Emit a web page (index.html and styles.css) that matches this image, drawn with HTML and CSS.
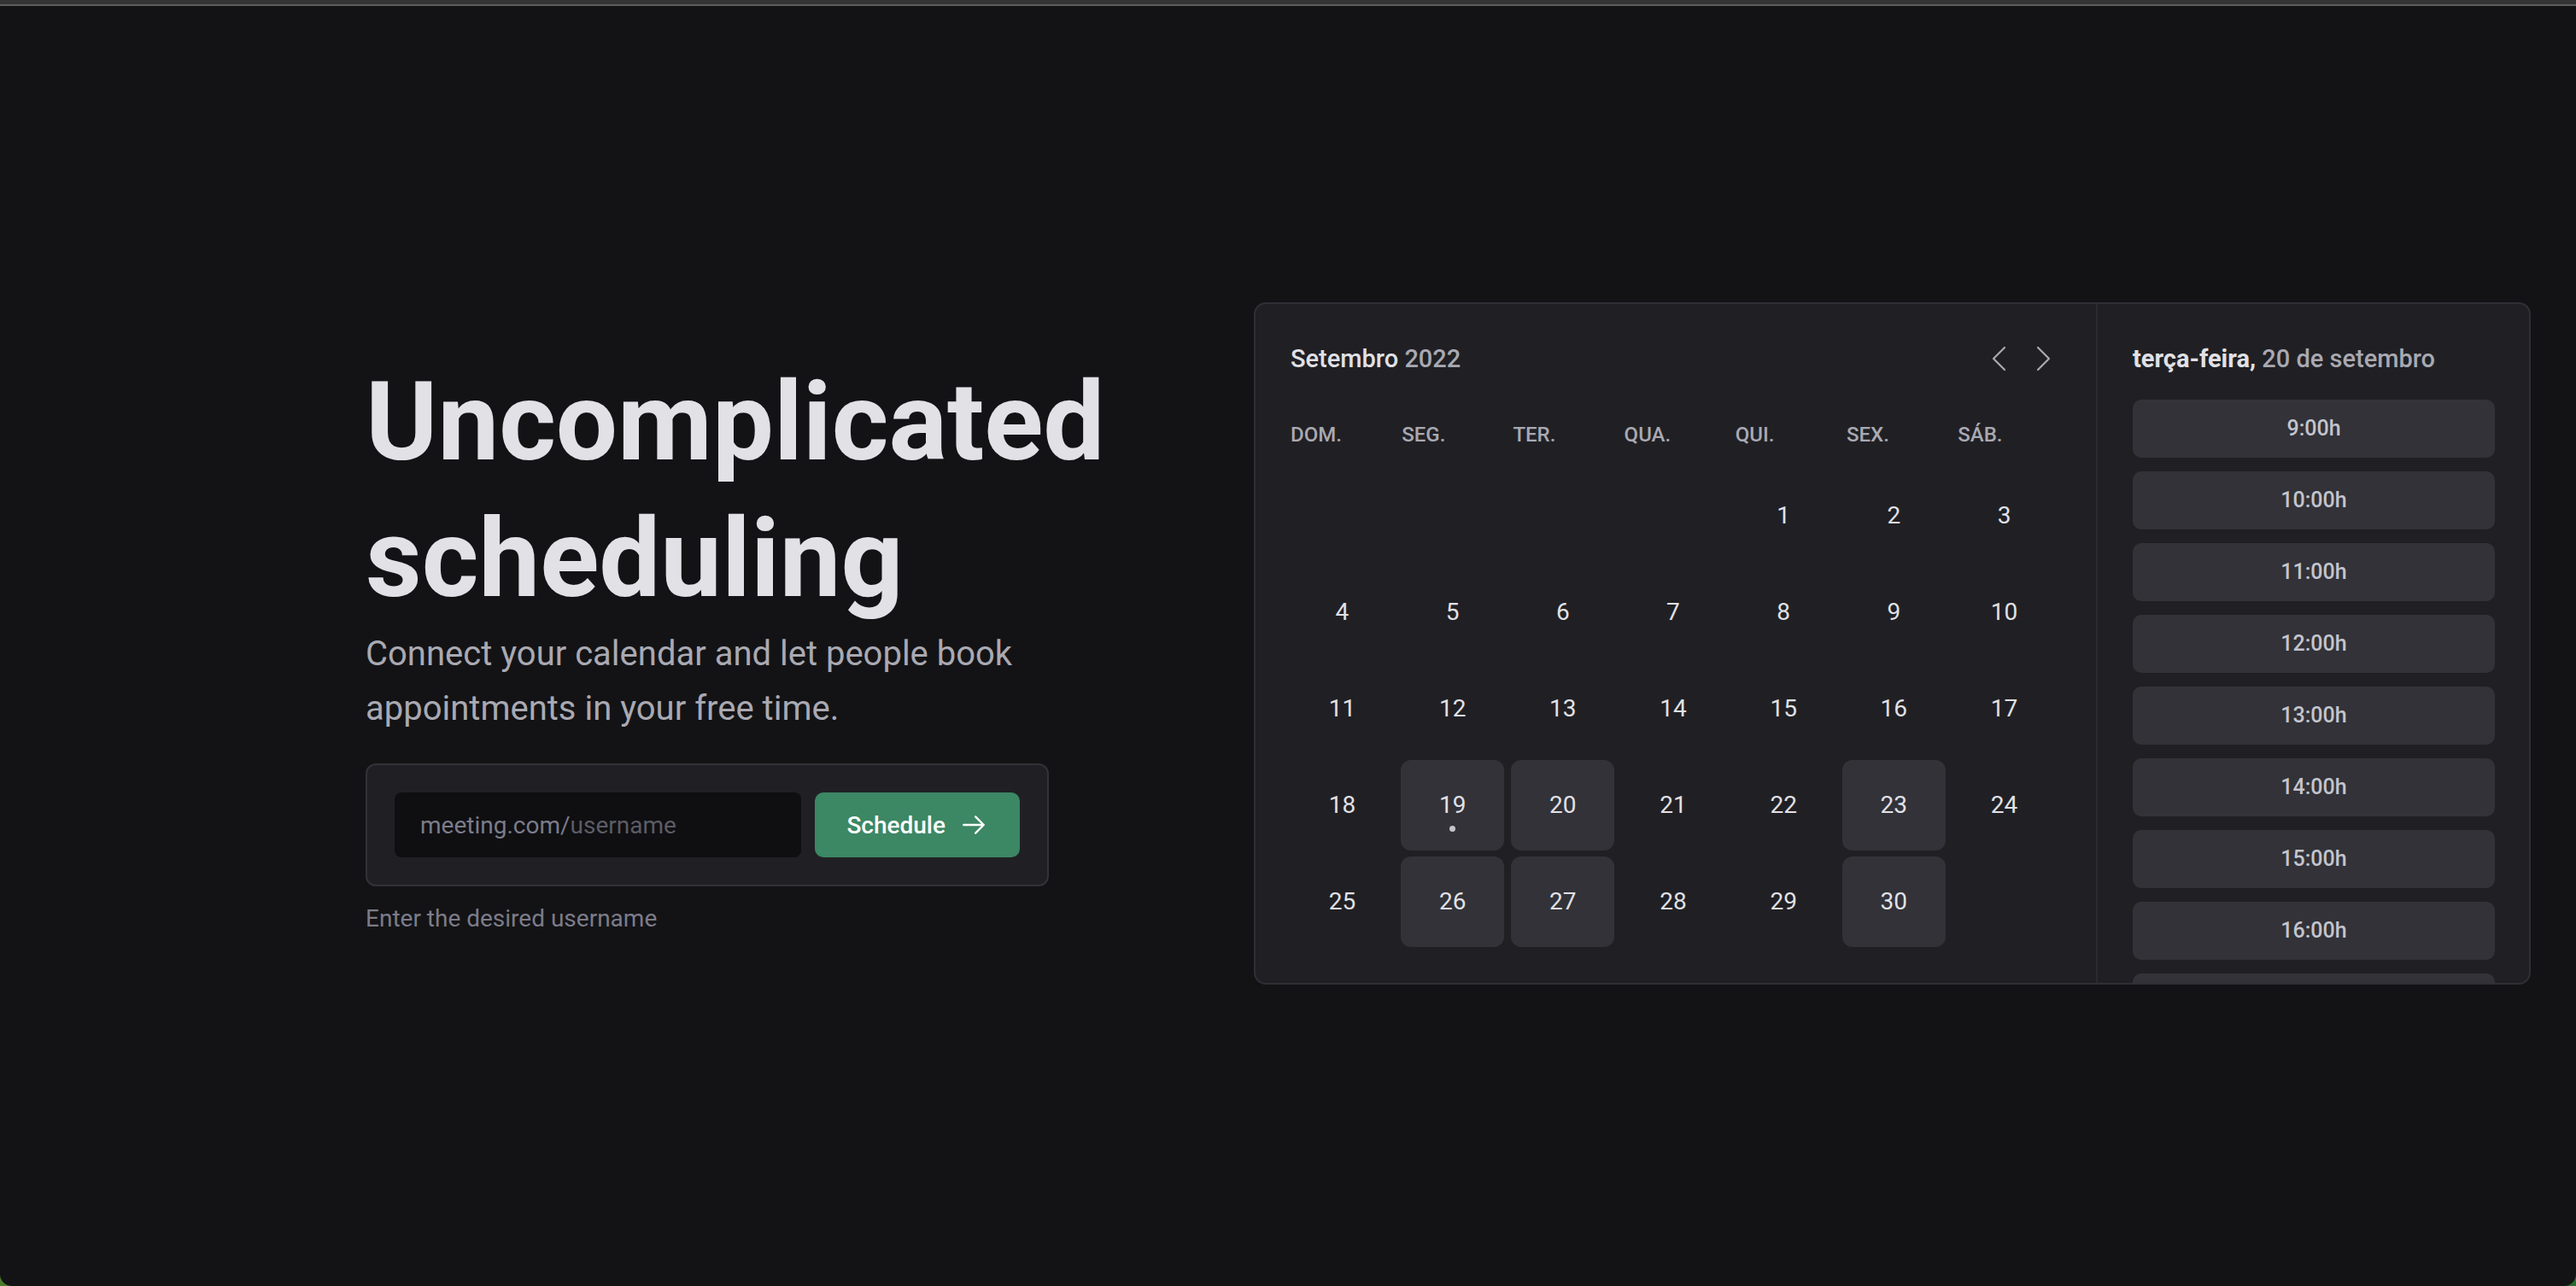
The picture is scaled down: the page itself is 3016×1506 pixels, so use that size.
FILE: index.html
```html
<!DOCTYPE html>
<html lang="en">
<head>
<meta charset="utf-8">
<title>Uncomplicated scheduling</title>
<link rel="stylesheet" href="styles.css">
</head>
<body>
<div class="window">
  <div class="chrome"></div>
  <main class="container">
    <section class="hero">
      <h1 class="heading">Uncomplicated scheduling</h1>
      <p class="lead">Connect your calendar and let people book appointments in your free time.</p>
      <form class="claim">
        <label class="field"><span class="prefix">meeting.com/</span><span class="placeholder">username</span></label>
        <button class="btn" type="button">Schedule
          <svg class="arrow" viewBox="0 0 256 256" width="34" height="34"><path d="M40 128h176M144 56l72 72-72 72" fill="none" stroke="currentColor" stroke-width="18" stroke-linecap="round" stroke-linejoin="round"/></svg>
        </button>
      </form>
      <p class="hint">Enter the desired username</p>
    </section>

    <section class="preview">
      <div class="card">
        <div class="cal">
          <div class="cal-head">
            <div class="cal-title">Setembro <span>2022</span></div>
            <div class="nav">
              <svg viewBox="0 0 24 40" width="24" height="40"><path d="M19 7 6 20l13 13" fill="none" stroke="currentColor" stroke-width="2.2" stroke-linecap="round" stroke-linejoin="round"/></svg>
              <svg viewBox="0 0 24 40" width="24" height="40"><path d="M5 7l13 13L5 33" fill="none" stroke="currentColor" stroke-width="2.2" stroke-linecap="round" stroke-linejoin="round"/></svg>
            </div>
          </div>
          <div class="weekdays">
            <span>DOM.</span><span>SEG.</span><span>TER.</span><span>QUA.</span><span>QUI.</span><span>SEX.</span><span>SÁB.</span>
          </div>
          <div class="days">
            <span class="day"></span><span class="day"></span><span class="day"></span><span class="day"></span>
            <span class="day">1</span><span class="day">2</span><span class="day">3</span>
            <span class="day">4</span><span class="day">5</span><span class="day">6</span><span class="day">7</span><span class="day">8</span><span class="day">9</span><span class="day">10</span>
            <span class="day">11</span><span class="day">12</span><span class="day">13</span><span class="day">14</span><span class="day">15</span><span class="day">16</span><span class="day">17</span>
            <span class="day">18</span><span class="day available">19<i class="dot"></i></span><span class="day available">20</span><span class="day">21</span><span class="day">22</span><span class="day available">23</span><span class="day">24</span>
            <span class="day">25</span><span class="day available">26</span><span class="day available">27</span><span class="day">28</span><span class="day">29</span><span class="day available">30</span><span class="day"></span>
          </div>
        </div>
        <div class="times">
          <div class="times-title"><b>terça-feira,</b> 20 de setembro</div>
          <div class="slots">
            <div class="slot">9:00h</div>
            <div class="slot">10:00h</div>
            <div class="slot">11:00h</div>
            <div class="slot">12:00h</div>
            <div class="slot">13:00h</div>
            <div class="slot">14:00h</div>
            <div class="slot">15:00h</div>
            <div class="slot">16:00h</div>
            <div class="slot"></div>
          </div>
        </div>
      </div>
    </section>
  </main>
</div>
</body>
</html>
```

FILE: styles.css
```css
html, body {
  margin: 0;
  height: 1506px;
  overflow: hidden;
}

body {
  background: linear-gradient(90deg, #4b7a2b, #2c6a30);
  font-family: Roboto, "Liberation Sans", sans-serif;
}

.window {
  height: 1506px;
  background: #131315;
  border-radius: 0 0 14px 14px;
  display: flex;
  flex-direction: column;
  overflow: hidden;
}

.chrome {
  flex: none;
  height: 5px;
  background: #353535;
  border-bottom: 2px solid #5e5e5e;
}

.container {
  flex: 1;
  display: flex;
  align-items: center;
  gap: 160px;
  padding-left: 348px;
}

.hero {
  flex: none;
  width: 960px;
  padding: 0 80px;
  box-sizing: border-box;
}

.heading {
  margin: 0;
  font-size: 128px;
  line-height: 160px;
  font-weight: 700;
  color: #e1e1e6;
}

.lead {
  margin: 0;
  font-size: 40px;
  line-height: 64px;
  color: #a9a9b2;
}

.claim {
  margin: 32px 0 0;
  display: grid;
  grid-template-columns: 1fr auto;
  gap: 16px;
  padding: 32px;
  background: #202024;
  border: 2px solid #323238;
  border-radius: 12px;
}

.field {
  height: 76px;
  display: flex;
  align-items: center;
  padding: 0 30px;
  background: #0f0f11;
  border-radius: 8px;
  font-size: 28px;
}

.prefix {
  color: #7c7c8a;
}

.placeholder {
  color: #5c5c66;
}

.btn {
  height: 76px;
  display: flex;
  align-items: center;
  gap: 16px;
  padding: 0 37px;
  border: 0;
  border-radius: 10px;
  background: #3c8764;
  color: #ffffff;
  font-family: Roboto, "Liberation Sans", sans-serif;
  font-size: 28px;
  font-weight: 500;
}

.arrow {
  display: block;
}

.hint {
  margin: 16px 0 0;
  font-size: 28px;
  line-height: 44.8px;
  color: #7c7c8a;
}

.preview {
  flex: none;
  margin-bottom: 7px;
}

.card {
  width: 1495px;
  height: 799px;
  box-sizing: border-box;
  border: 2px solid #2f2f34;
  border-radius: 14px;
  background: #202024;
  display: grid;
  grid-template-columns: 986px 1fr;
  overflow: hidden;
}

.cal {
  padding: 44px 47px 0 41px;
  border-right: 2px solid #2a2a2f;
}

.cal-head {
  height: 40px;
  display: flex;
  align-items: center;
  justify-content: space-between;
}

.cal-title {
  font-size: 29px;
  font-weight: 500;
  color: #e1e1e6;
}

.cal-title span {
  font-weight: 500;
  color: #a9a9b2;
}

.nav {
  display: flex;
  gap: 29px;
  margin-right: 2px;
  color: #a9a9b2;
}

.nav svg {
  display: block;
}

.weekdays {
  margin-top: 49px;
  height: 40px;
  display: grid;
  grid-template-columns: repeat(7, 1fr);
  column-gap: 15.4px;
  align-items: center;
  font-size: 24px;
  font-weight: 500;
  color: #a9a9b2;
}

.days {
  margin-top: 22px;
  display: grid;
  grid-template-columns: repeat(7, 1fr);
  grid-auto-rows: 106px;
  column-gap: 8.2px;
  row-gap: 7px;
}

.day {
  position: relative;
  display: flex;
  align-items: center;
  justify-content: center;
  border-radius: 12px;
  font-size: 28px;
  color: #e1e1e6;
}

.day.available {
  background: #323238;
}

.dot {
  position: absolute;
  left: 50%;
  top: 77px;
  width: 7px;
  height: 7px;
  margin-left: -3.5px;
  border-radius: 50%;
  background: #c4c4cc;
}

.times {
  padding: 44px 40px 0 41px;
}

.times-title {
  height: 40px;
  line-height: 40px;
  font-size: 29px;
  font-weight: 500;
  color: #a9a9b2;
  white-space: nowrap;
}

.times-title b {
  font-weight: 700;
  color: #e1e1e6;
}

.slots {
  margin-top: 28px;
  display: flex;
  flex-direction: column;
  gap: 16px;
}

.slot {
  flex: none;
  height: 68px;
  display: flex;
  align-items: center;
  justify-content: center;
  background: #323238;
  border-radius: 10px;
  font-size: 25px;
  font-weight: 500;
  color: #c4c4cc;
}
```
